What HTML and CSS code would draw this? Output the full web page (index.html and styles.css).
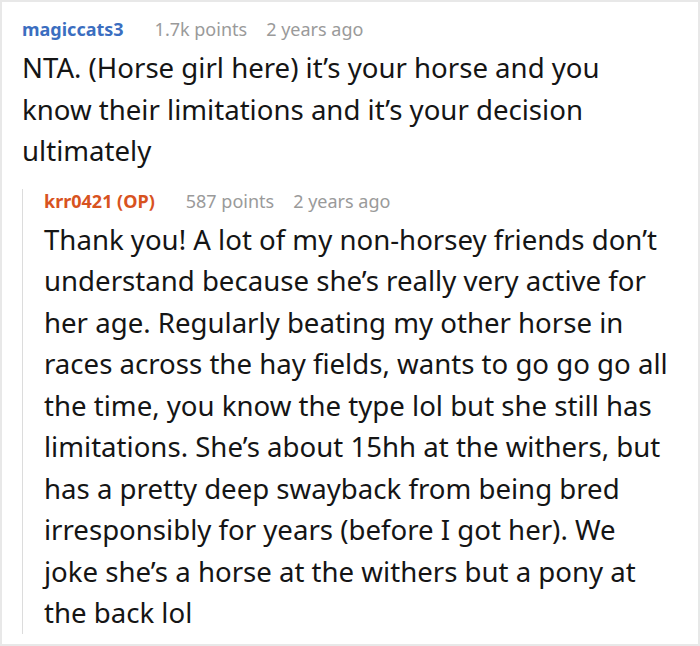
FILE: index.html
```html
<!DOCTYPE html>
<html>
<head>
<meta charset="utf-8">
<link rel="stylesheet" href="styles.css">
</head>
<body>
<div class="frame">
  <div class="comment">
    <div class="meta">
      <span class="user">magiccats3</span>
      <span class="info">1.7k points</span>
      <span class="info">2 years ago</span>
    </div>
    <p class="body">NTA. (Horse girl here) it’s your horse and you know their limitations and it’s your decision ultimately</p>
    <div class="reply">
      <div class="meta reply-meta">
        <span class="user op">krr0421 (OP)</span>
        <span class="info">587 points</span>
        <span class="info">2 years ago</span>
      </div>
      <p class="body reply-body">Thank you! A lot of my non-horsey friends don’t understand because she’s really very active for her age. Regularly beating my other horse in races across the hay fields, wants to go go go all the time, you know the type lol but she still has limitations. She’s about 15hh at the withers, but has a pretty deep swayback from being bred irresponsibly for years (before I got her). We joke she’s a horse at the withers but a pony at the back lol</p>
    </div>
  </div>
</div>
</body>
</html>
```
FILE: styles.css
```css
html, body {
  margin: 0;
  padding: 0;
  background: #ffffff;
}
.frame {
  box-sizing: border-box;
  width: 700px;
  height: 646px;
  border: 2px solid #e8e8e8;
  overflow: hidden;
  font-family: "Noto Sans", "Open Sans", sans-serif;
}
.comment {
  padding: 15px 25px 0 20px;
}
.meta {
  display: flex;
  font-size: 18px;
  line-height: 24px;
  white-space: nowrap;
}
.user {
  font-weight: 700;
  color: #3b6ec0;
  margin-right: 31px;
}
.user.op {
  color: #d8531f;
}
.info {
  color: #9a9a9a;
  margin-right: 19px;
}
.body {
  margin: 6px 0 0 0;
  font-size: 27.6px;
  line-height: 41.5px;
  color: #151515;
}
.reply {
  margin-top: 28px;
  border-left: 1px solid #dcdcdc;
  padding-left: 21px;
}
.reply-meta {
  margin-top: -11px;
}
.reply-body {
  margin-bottom: -6px;
}
```
